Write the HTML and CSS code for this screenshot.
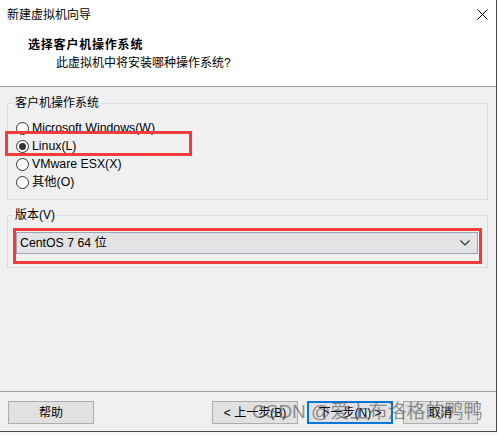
FILE: index.html
```html
<!DOCTYPE html>
<html lang="zh-CN">
<head>
<meta charset="utf-8">
<title>新建虚拟机向导</title>
<link rel="stylesheet" href="styles.css">
</head>
<body>
<div class="window">
  <div class="top">
    <div class="titlebar">
      <span class="title">新建虚拟机向导</span>
      <svg class="close" width="11" height="11" viewBox="0 0 11 11"><path d="M0.5 0.5 L10.5 10.5 M10.5 0.5 L0.5 10.5" stroke="#000" stroke-width="1" fill="none"/></svg>
    </div>
    <div class="heading">选择客户机操作系统</div>
    <div class="subheading">此虚拟机中将安装哪种操作系统?</div>
  </div>
  <div class="content">
    <fieldset class="group group-os">
      <legend>客户机操作系统</legend>
      <div class="group-inner os-list">
        <div class="radio"><span class="circle"></span>Microsoft Windows(W)</div>
        <div class="radio"><span class="circle checked"></span>Linux(L)</div>
        <div class="radio"><span class="circle"></span>VMware ESX(X)</div>
        <div class="radio"><span class="circle"></span>其他(O)</div>
      </div>
    </fieldset>
    <fieldset class="group group-ver">
      <legend>版本(V)</legend>
      <div class="group-inner ver-inner">
        <div class="combo">
          <span class="combo-text">CentOS 7 64 位</span>
          <svg class="chevron" width="10" height="6" viewBox="0 0 10 6"><path d="M0.5 0.5 L5 5 L9.5 0.5" stroke="#333" stroke-width="1.2" fill="none"/></svg>
        </div>
      </div>
    </fieldset>
  </div>
  <div class="footer">
    <div class="btn btn-help">帮助</div>
    <div class="btn btn-back">&lt; 上一步(B)</div>
    <div class="btn btn-next">下一步(N) &gt;</div>
    <div class="btn btn-cancel">取消</div>
  </div>
  <div class="mark mark-os"></div>
  <div class="mark mark-ver"></div>
  <div class="watermark">CSDN @爱上布洛格的鸭鸭</div>
</div>
</body>
</html>
```

FILE: styles.css
```css
* { box-sizing: border-box; }
html, body { margin: 0; padding: 0; }
body {
  background: #f7f7f7;
  font-family: "Liberation Sans", "Noto Sans CJK SC", sans-serif;
  font-size: 12px;
  color: #000;
  width: 498px;
  height: 435px;
  overflow: hidden;
}
.window {
  position: relative;
  width: 497px;
  height: 432px;
  background: #f0f0f0;
  border-right: 1px solid #4a4a4a;
  border-bottom: 1px solid #4a4a4a;
  display: flex;
  flex-direction: column;
}
.top {
  height: 87px;
  background: #fff;
  border-bottom: 1px solid #a0a0a0;
}
.titlebar {
  height: 30px;
  display: flex;
  align-items: center;
  justify-content: space-between;
  padding: 0 8px 1px 7px;
}
.title { line-height: 16px; }
.close { display: block; }
.heading {
  margin-top: 7px;
  padding-left: 28px;
  line-height: 16px;
  font-weight: bold;
  letter-spacing: 0.8px;
}
.subheading {
  margin-top: 2px;
  padding-left: 56px;
  line-height: 16px;
}
.content {
  flex: 1;
  padding: 0 8px 0 7px;
}
.group {
  margin: 0;
  padding: 0;
  border: 1px solid #dcdcdc;
  min-width: 0;
}
.group legend {
  margin-left: 5px;
  padding: 0 2px;
  line-height: 16px;
  font-size: 12px;
}
.group-os { margin-top: 8px; }
.group-ver { margin-top: 7px; }
.os-list { padding: 8px 0 8px 8px; }
.radio {
  height: 18px;
  display: flex;
  align-items: center;
  line-height: 16px;
  font-size: 12.3px;
}
.circle {
  width: 13px;
  height: 13px;
  border: 1px solid #333;
  border-radius: 50%;
  background: #fff;
  margin-right: 3px;
  display: flex;
  align-items: center;
  justify-content: center;
  flex: none;
}
.circle.checked::after {
  content: "";
  width: 7px;
  height: 7px;
  border-radius: 50%;
  background: #333;
}
.ver-inner { padding: 9px 9px 13px 8px; }
.combo {
  height: 22px;
  background: #e3e3e3;
  border: 1px solid #97a8bd;
  display: flex;
  align-items: center;
  justify-content: space-between;
  padding: 0 7px 0 3px;
}
.combo-text { line-height: 16px; font-size: 12.3px; }
.chevron { display: block; }
.footer {
  height: 40px;
  border-top: 1px solid #a0a0a0;
  display: flex;
  align-items: flex-start;
  padding: 9px 18px 0 8px;
}
.btn {
  height: 23px;
  width: 86px;
  border: 1px solid #adadad;
  background: #e1e1e1;
  display: flex;
  align-items: center;
  justify-content: center;
  line-height: 16px;
}
.btn-back { margin-left: auto; }
.btn-next {
  margin-left: 9px;
  border: 2px solid #0078d7;
}
.btn-cancel {
  margin-left: 10px;
  width: 75px;
}
.mark {
  position: absolute;
  border: 3px solid #f23b3b;
}
.mark-os { left: 5px; top: 131px; width: 187px; height: 25px; }
.mark-ver { left: 13px; top: 228px; width: 469px; height: 36px; }
.watermark {
  position: absolute;
  left: 252px;
  top: 399px;
  font-size: 19px;
  line-height: 26px;
  color: rgba(80, 80, 80, 0.62);
  white-space: nowrap;
}
```
